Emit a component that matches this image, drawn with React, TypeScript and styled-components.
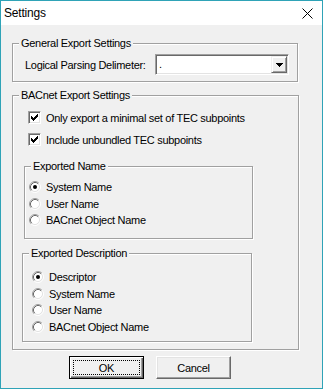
import React from 'react';
import styled, { createGlobalStyle } from 'styled-components';

const GlobalStyle = createGlobalStyle`
  html, body {
    margin: 0;
    padding: 0;
    background: #f0f0f0;
  }
  body {
    font-family: "Liberation Sans", Arial, sans-serif;
    font-size: 11px;
    letter-spacing: -0.3px;
    color: #000;
  }
`;

// Dialog frame with accent border
const Window = styled.div`
  box-sizing: border-box;
  width: 323px;
  height: 389px;
  border: 1px solid #2fa3b7;
  background: #f0f0f0;
  display: flex;
  flex-direction: column;
`;

const TitleBar = styled.div`
  height: 24px;
  flex-shrink: 0;
  background: #fff;
  display: flex;
  align-items: center;
  justify-content: space-between;
  padding: 0 9px 0 3px;
`;

const Title = styled.span`
  font-size: 12px;
  letter-spacing: -0.2px;
`;

const Body = styled.div`
  flex: 1;
  padding: 12px 0 0 11px;
  display: flex;
  flex-direction: column;
`;

// Etched group box
const Group = styled.fieldset<{ $width: number; $mt?: number; $ml?: number; $pt: number; $pb: number }>`
  box-sizing: border-box;
  width: ${({ $width }) => $width}px;
  margin: ${({ $mt = 0 }) => $mt}px 0 0 ${({ $ml = 0 }) => $ml}px;
  padding: ${({ $pt }) => $pt}px 0 ${({ $pb }) => $pb}px 0;
  border: 1px solid #a0a0a0;
  box-shadow: inset 1px 1px 0 #fff, 1px 1px 0 #fff;
  min-inline-size: 0;
`;

const Legend = styled.legend`
  margin-left: 6px;
  padding: 0 2px;
  height: 13px;
  line-height: 13px;
  background: #f0f0f0;
`;

const FieldRow = styled.div`
  display: flex;
  align-items: center;
  justify-content: space-between;
  height: 21px;
  padding: 0 8px 0 12px;
`;

const Combo = styled.div`
  box-sizing: border-box;
  width: 134px;
  height: 21px;
  padding: 1px;
  background: #fff;
  border: 1px solid;
  border-color: #a0a0a0 #fff #fff #a0a0a0;
  box-shadow: inset 1px 1px 0 #696969, inset -1px -1px 0 #e3e3e3;
  display: flex;
`;

const ComboValue = styled.span`
  flex: 1;
  padding-left: 2px;
  line-height: 17px;
`;

const DropButton = styled.div`
  box-sizing: border-box;
  width: 16px;
  height: 17px;
  background: #f0f0f0;
  border: 1px solid;
  border-color: #f0f0f0 #696969 #696969 #f0f0f0;
  box-shadow: inset 1px 1px 0 #fff, inset -1px -1px 0 #a0a0a0;
  display: flex;
  align-items: center;
  justify-content: center;
`;

const CheckRow = styled.label<{ $mt?: number }>`
  display: flex;
  align-items: center;
  gap: 5px;
  height: 13px;
  margin: ${({ $mt = 0 }) => $mt}px 0 0 15px;
`;

const CheckBox = styled.span`
  box-sizing: border-box;
  width: 13px;
  height: 13px;
  flex-shrink: 0;
  background: #fff;
  border: 1px solid;
  border-color: #a0a0a0 #fff #fff #a0a0a0;
  box-shadow: inset 1px 1px 0 #696969, inset -1px -1px 0 #e3e3e3;
  display: flex;
`;

const RadioRow = styled.label<{ $ml: number }>`
  display: flex;
  align-items: center;
  gap: 5px;
  height: 16.5px;
  padding-left: ${({ $ml }) => $ml}px;
`;

const ButtonRow = styled.div`
  display: flex;
  gap: 12px;
  margin-top: 6px;
  padding-left: 57px;
`;

const Button = styled.button<{ $default?: boolean }>`
  box-sizing: border-box;
  width: 75px;
  height: 23px;
  padding: 3px;
  font: inherit;
  letter-spacing: inherit;
  color: #000;
  background: #f0f0f0;
  border: 1px solid;
  border-color: ${({ $default }) => ($default ? '#000' : '#fff #696969 #696969 #fff')};
  box-shadow: ${({ $default }) =>
    $default
      ? 'inset 1px 1px 0 #fff, inset -1px -1px 0 #696969, inset -2px -2px 0 #a0a0a0'
      : 'inset -1px -1px 0 #a0a0a0, inset 1px 1px 0 #e3e3e3'};
  display: flex;
`;

const FocusRing = styled.span<{ $on?: boolean }>`
  flex: 1;
  display: flex;
  align-items: center;
  justify-content: center;
  border: 1px dotted ${({ $on }) => ($on ? '#000' : 'transparent')};
`;

const CloseIcon = () => (
  <svg width="11" height="11" viewBox="0 0 11 11">
    <path d="M0.5 0.5 L10.5 10.5 M10.5 0.5 L0.5 10.5" stroke="#000" strokeWidth="1" fill="none" />
  </svg>
);

const DownArrow = () => (
  <svg width="7" height="4" viewBox="0 0 7 4" shapeRendering="crispEdges">
    <rect x="0" y="0" width="7" height="1" fill="#000" />
    <rect x="1" y="1" width="5" height="1" fill="#000" />
    <rect x="2" y="2" width="3" height="1" fill="#000" />
    <rect x="3" y="3" width="1" height="1" fill="#000" />
  </svg>
);

const CheckMark = () => (
  <svg width="11" height="11" viewBox="0 0 11 11" shapeRendering="crispEdges">
    <g fill="#000">
      <rect x="8" y="2" width="1" height="1" />
      <rect x="7" y="3" width="2" height="1" />
      <rect x="2" y="4" width="1" height="1" />
      <rect x="6" y="4" width="3" height="1" />
      <rect x="2" y="5" width="2" height="1" />
      <rect x="5" y="5" width="3" height="1" />
      <rect x="2" y="6" width="5" height="1" />
      <rect x="3" y="7" width="3" height="1" />
      <rect x="4" y="8" width="1" height="1" />
    </g>
  </svg>
);

const Radio = ({ checked }: { checked?: boolean }) => (
  <svg width="12" height="12" viewBox="0 0 12 12" style={{ flexShrink: 0 }}>
    <circle cx="6" cy="6" r="4.5" fill="#fff" />
    <path d="M2.11 9.89 A5.5 5.5 0 0 1 9.89 2.11" stroke="#a0a0a0" fill="none" />
    <path d="M9.89 2.11 A5.5 5.5 0 0 1 2.11 9.89" stroke="#fff" fill="none" />
    <path d="M2.82 9.18 A4.5 4.5 0 0 1 9.18 2.82" stroke="#696969" fill="none" />
    <path d="M9.18 2.82 A4.5 4.5 0 0 1 2.82 9.18" stroke="#e3e3e3" fill="none" />
    {checked && <circle cx="6" cy="6" r="2" fill="#000" />}
  </svg>
);

const nameOptions = ['System Name', 'User Name', 'BACnet Object Name'];
const descriptionOptions = ['Descriptor', 'System Name', 'User Name', 'BACnet Object Name'];

export default function App() {
  return (
    <>
      <GlobalStyle />
      <Window>
        <TitleBar>
          <Title>Settings</Title>
          <CloseIcon />
        </TitleBar>
        <Body>
          <Group $width={286} $pt={4} $pb={6}>
            <Legend>General Export Settings</Legend>
            <FieldRow>
              <span>Logical Parsing Delimeter:</span>
              <Combo>
                <ComboValue>.</ComboValue>
                <DropButton>
                  <DownArrow />
                </DropButton>
              </Combo>
            </FieldRow>
          </Group>

          <Group $width={287} $mt={7} $pt={9} $pb={7}>
            <Legend>BACnet Export Settings</Legend>
            <CheckRow>
              <CheckBox>
                <CheckMark />
              </CheckBox>
              Only export a minimal set of TEC subpoints
            </CheckRow>
            <CheckRow $mt={9}>
              <CheckBox>
                <CheckMark />
              </CheckBox>
              Include unbundled TEC subpoints
            </CheckRow>

            <Group $width={229} $mt={14} $ml={11} $pt={6} $pb={9.5}>
              <Legend>Exported Name</Legend>
              {nameOptions.map((label, i) => (
                <RadioRow key={label} $ml={4}>
                  <Radio checked={i === 0} />
                  {label}
                </RadioRow>
              ))}
            </Group>

            <Group $width={230} $mt={8} $ml={9} $pt={9} $pb={6}>
              <Legend>Exported Description</Legend>
              {descriptionOptions.map((label, i) => (
                <RadioRow key={label} $ml={9}>
                  <Radio checked={i === 0} />
                  {label}
                </RadioRow>
              ))}
            </Group>
          </Group>

          <ButtonRow>
            <Button $default>
              <FocusRing $on>OK</FocusRing>
            </Button>
            <Button>
              <FocusRing>Cancel</FocusRing>
            </Button>
          </ButtonRow>
        </Body>
      </Window>
    </>
  );
}
